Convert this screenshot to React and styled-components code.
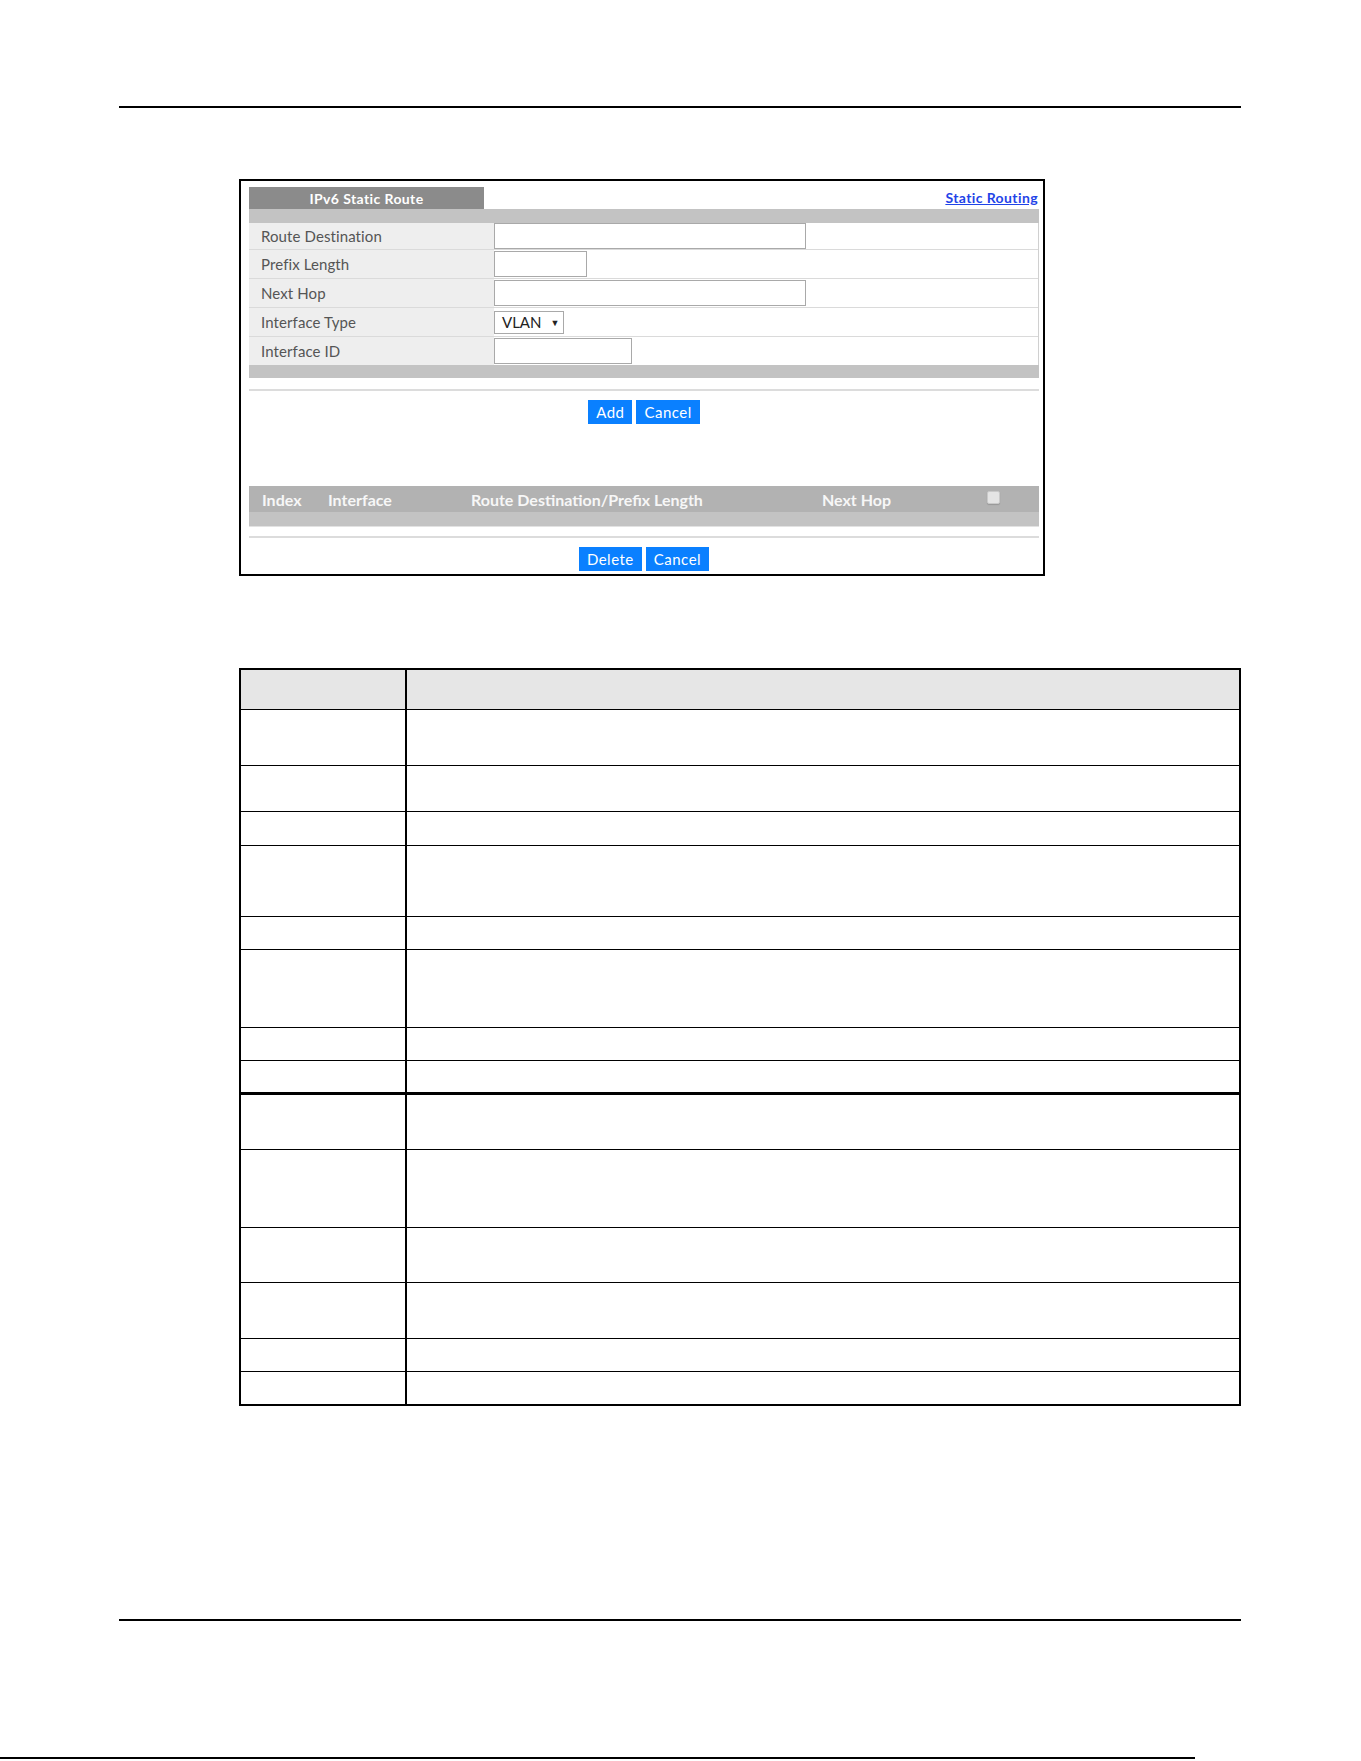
import React from "react";
import styled, { createGlobalStyle } from "styled-components";

const GlobalStyle = createGlobalStyle`
  html, body {
    margin: 0;
    padding: 0;
    background: #ffffff;
  }
  body {
    font-family: "Lato", "Liberation Sans", sans-serif;
    color: #222;
  }
`;

const FORM_ROWS = [
  { label: "Route Destination", field: "text", width: 312, h: 27 },
  { label: "Prefix Length", field: "text", width: 93, h: 29 },
  { label: "Next Hop", field: "text", width: 312, h: 29 },
  { label: "Interface Type", field: "select", h: 29 },
  { label: "Interface ID", field: "text", width: 138, h: 28 },
];

const LIST_COLUMNS = ["Index", "Interface", "Route Destination/Prefix Length", "Next Hop"];

// row heights include the bottom rule
const FIELD_ROWS = [
  { h: 56 },
  { h: 46 },
  { h: 34 },
  { h: 71 },
  { h: 33 },
  { h: 78 },
  { h: 33 },
  { h: 34, thick: true },
  { h: 55 },
  { h: 78 },
  { h: 55 },
  { h: 56 },
  { h: 33 },
  { h: 32, last: true },
];

const App = () => {
  return (
    <Page>
      <GlobalStyle />
      <Rule />
      <Panel>
        <TitleBar>
          <Tab>IPv6 Static Route</Tab>
          <NavLink href="#">Static Routing</NavLink>
        </TitleBar>
        <GrayBar />
        <Form>
          {FORM_ROWS.map((row) => (
            <FormRow key={row.label} $h={row.h}>
              <Label>{row.label}</Label>
              <Value>
                {row.field === "select" ? (
                  <Select>
                    <span>VLAN</span>
                    <Arrow>▼</Arrow>
                  </Select>
                ) : (
                  <TextInput $w={row.width} />
                )}
              </Value>
            </FormRow>
          ))}
        </Form>
        <GrayBar $h={13} />
        <Separator />
        <Buttons>
          <Button>Add</Button>
          <Button>Cancel</Button>
        </Buttons>
        <ListHead>
          {LIST_COLUMNS.map((col) => (
            <HeadCell key={col}>{col}</HeadCell>
          ))}
          <CheckBox />
        </ListHead>
        <GrayBar $h={14} $edge />
        <Separator $top={9} />
        <Buttons>
          <Button>Delete</Button>
          <Button>Cancel</Button>
        </Buttons>
      </Panel>

      <FieldTable>
        <TableRow $h={40} $head>
          <KeyCell />
          <DescCell />
        </TableRow>
        {FIELD_ROWS.map((r, idx) => (
          <TableRow key={idx} $h={r.h} $thick={r.thick} $last={r.last}>
            <KeyCell />
            <DescCell />
          </TableRow>
        ))}
      </FieldTable>

      <Rule $top={213} />
      <EdgeLine />
    </Page>
  );
};

export default App;

const Page = styled.div`
  width: 1361px;
  height: 1761px;
  padding-top: 106px;
  box-sizing: border-box;
  overflow: hidden;
`;

const Rule = styled.div`
  margin: ${({ $top }) => $top || 0}px 0 0 119px;
  width: 1122px;
  height: 2px;
  background: #000;
`;

const Panel = styled.div`
  margin: 71px 0 0 239px;
  width: 806px;
  height: 397px;
  box-sizing: border-box;
  border: 2px solid #000;
  padding: 6px 4px 0 8px;
`;

const TitleBar = styled.div`
  display: flex;
  justify-content: space-between;
  align-items: stretch;
  height: 22px;
`;

const Tab = styled.div`
  width: 235px;
  background: #8b8b8b;
  color: #fff;
  font-size: 14px;
  font-weight: 700;
  letter-spacing: 0.4px;
  display: flex;
  align-items: center;
  justify-content: center;
`;

const NavLink = styled.a`
  align-self: flex-end;
  margin: 0 1px 3px 0;
  color: #1f44e8;
  font-size: 14px;
  font-weight: 700;
  letter-spacing: 0.4px;
  text-decoration: underline;
`;

const GrayBar = styled.div`
  height: ${({ $h }) => $h || 14}px;
  background: #c3c3c3;
  border-bottom: ${({ $edge }) => ($edge ? "1px solid #e2e2e2" : "none")};
`;

const Form = styled.div`
  border-right: 1px solid #d0d0d0;
`;

const FormRow = styled.div`
  display: grid;
  grid-template-columns: 245px 1fr;
  height: ${({ $h }) => $h}px;
  box-sizing: border-box;
  border-bottom: 1px solid #dadada;

  &:last-child {
    border-bottom: none;
  }
`;

const Label = styled.div`
  background: #eeeeee;
  padding-left: 12px;
  display: flex;
  align-items: center;
  font-size: 15px;
  letter-spacing: 0.1px;
  color: #555;
`;

const Value = styled.div`
  display: flex;
  align-items: center;
  background: #fff;
`;

const TextInput = styled.input.attrs({ type: "text" })`
  width: ${({ $w }) => $w}px;
  height: 26px;
  box-sizing: border-box;
  border: 1px solid #a9a9a9;
  margin: 0;
  padding: 0 4px;
  background: #fff;
  outline: none;
`;

const Select = styled.div`
  width: 70px;
  height: 23px;
  box-sizing: border-box;
  border: 1px solid #a9a9a9;
  display: flex;
  align-items: center;
  padding-left: 7px;
  font-size: 15px;
  color: #222;
`;

const Arrow = styled.span`
  font-size: 9px;
  margin-left: 9px;
  color: #222;
`;

const Separator = styled.div`
  margin-top: ${({ $top }) => $top || 11}px;
  height: 2px;
  background: #dcdcdc;
`;

const Buttons = styled.div`
  display: flex;
  justify-content: center;
  gap: 4px;
  margin-top: 9px;
  margin-bottom: 62px;

  &:last-child {
    margin-bottom: 0;
  }
`;

const Button = styled.button`
  height: 24px;
  padding: 0 8px;
  border: none;
  border-radius: 0;
  background: #0a80ff;
  color: #fff;
  font-family: "Lato", "Liberation Sans", sans-serif;
  font-size: 15px;
  letter-spacing: 0.5px;
  cursor: pointer;
`;

const ListHead = styled.div`
  display: grid;
  grid-template-columns: 66px 143px 351px 165px 1fr;
  align-items: center;
  height: 26px;
  padding-left: 13px;
  background: #b2b2b2;
`;

const HeadCell = styled.div`
  color: #f7f7f7;
  font-size: 16px;
  font-weight: 700;
  white-space: nowrap;
`;

const CheckBox = styled.div`
  width: 11px;
  height: 11px;
  border: 1px solid #c9c9c9;
  border-radius: 2px;
  background: #e4e4e4;
  box-shadow: 0 1px 1px rgba(0, 0, 0, 0.15);
  margin-top: -3px;
`;

const FieldTable = styled.div`
  margin: 92px 0 0 239px;
  width: 1002px;
  box-sizing: border-box;
  border: 2px solid #000;
`;

const TableRow = styled.div`
  display: flex;
  height: ${({ $h }) => $h}px;
  box-sizing: border-box;
  background: ${({ $head }) => ($head ? "#e6e6e6" : "#fff")};
  border-bottom: ${({ $thick, $last }) =>
    $last ? "none" : $thick ? "3px solid #000" : "1px solid #000"};
`;

const KeyCell = styled.div`
  width: 164px;
  flex-shrink: 0;
  border-right: 2px solid #000;
`;

const DescCell = styled.div`
  flex: 1;
`;

const EdgeLine = styled.div`
  margin-top: 136px;
  width: 1195px;
  height: 2px;
  background: #000;
`;
